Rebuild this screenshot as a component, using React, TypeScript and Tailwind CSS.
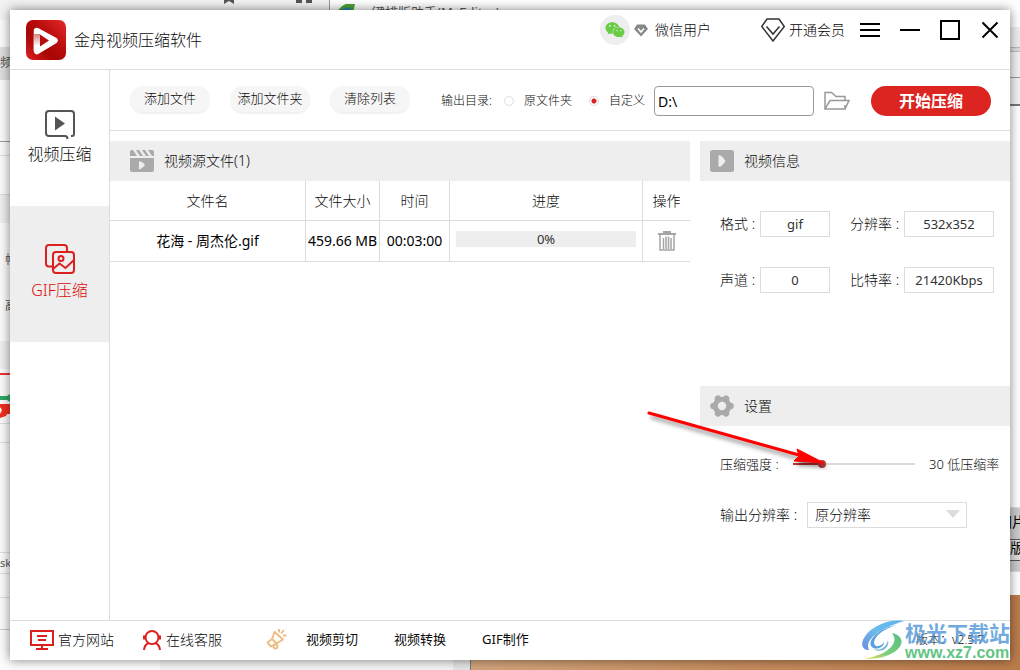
import { useState } from 'react';
import type { ReactNode } from 'react';
import { FaWeixin } from 'react-icons/fa';

const files = [{ name: '花海 - 周杰伦.gif', size: '459.66 MB', time: '00:03:00', progress: 0 }];

/* ---------- icons ---------- */

function LogoIcon() {
  return (
    <svg width="40" height="40" viewBox="0 0 40 40" aria-hidden="true">
      <defs>
        <linearGradient id="logoBg" x1="0" y1="1" x2="1" y2="0">
          <stop offset="0" stopColor="#e02222" />
          <stop offset="0.35" stopColor="#a80505" />
          <stop offset="0.6" stopColor="#b90c0c" />
          <stop offset="1" stopColor="#e62a2a" />
        </linearGradient>
        <linearGradient id="logoFold" x1="0" y1="0" x2="0" y2="1">
          <stop offset="0" stopColor="#d58080" />
          <stop offset="0.7" stopColor="#fff" />
        </linearGradient>
      </defs>
      <rect width="40" height="40" rx="7" fill="url(#logoBg)" />
      <path d="M11 11 28.500 20.500 11 31Z" fill="none" stroke="#fff" strokeWidth="6.500" strokeLinejoin="round" />
      <path d="M7.750 14 14 14V29L7.750 31Z" fill="url(#logoFold)" />
      <path d="M14 14.500 23 20.500 14 26.500Z" fill="#b50d0d" />
    </svg>
  );
}

function VipIcon() {
  return (
    <svg width="24" height="24" viewBox="0 0 24 24" fill="none" stroke="#333" strokeWidth="1.500" aria-hidden="true">
      <path d="M6 1h12l5.300 7.500L12 23 .7 8.500Z" />
      <path d="M5.500 8.500 12 16l6.500-7.500" />
    </svg>
  );
}

function BadgeIcon() {
  return (
    <svg width="14" height="13" viewBox="0 0 14 13" aria-hidden="true">
      <path d="M3 .5h8L14 5 7 12.500 0 5Z" fill="#888" />
      <path d="M4 4.500 7 8l3-3.500" fill="none" stroke="#fff" strokeWidth="1.500" />
    </svg>
  );
}

function FolderIcon() {
  return (
    <svg width="26" height="20" viewBox="0 0 26 20" fill="none" stroke="#999" strokeWidth="1.500" aria-hidden="true">
      <path d="M21 9V5.500H12L7.500 1.500H1v16.500h20V14" />
      <path d="M1 18 6 9.500h19L21 18" />
    </svg>
  );
}

function VideoIcon() {
  return (
    <svg width="30" height="31" viewBox="0 0 30 31" fill="none" stroke="#555" strokeWidth="2" aria-hidden="true">
      <path d="M26 28h1q2 0 2-2V6q0-3-3-3H4Q1 3 1 6v19q0 3 3 3h16q2.500 0 2.500 3" />
      <path d="M10 8.500v14l10-7Z" fill="#555" stroke="none" />
    </svg>
  );
}

function GifIcon() {
  return (
    <svg width="30" height="31" viewBox="0 0 30 31" fill="none" stroke="#dc2020" strokeWidth="2" aria-hidden="true">
      <path d="M8 22.500H4q-3 0-3-3V4q0-3 3-3h15q3 0 3 3v4" />
      <rect x="8" y="8" width="21" height="21" rx="3" />
      <circle cx="16" cy="14.500" r="2.500" />
      <path d="m8 25 6.500-5.500 6 4.500L29 16" />
    </svg>
  );
}

function ClapperIcon() {
  return (
    <svg width="24" height="22" viewBox="0 0 24 22" fill="#aaa" aria-hidden="true">
      <path d="M0 2q0-2 2-2h1l4 6H0ZM6 0h3l4 6h-3ZM12 0h3l4 6h-3ZM18 0h4q2 0 2 2v4h-2Z" />
      <path d="M0 8h24v12q0 2-2 2H2q-2 0-2-2Z" />
      <path d="M9 11.500q2-1 6 3.500-4 5-6 4Z" fill="#eee" />
    </svg>
  );
}

function InfoIcon() {
  return (
    <svg width="24" height="22" viewBox="0 0 24 22" aria-hidden="true">
      <rect width="24" height="22" rx="2.500" fill="#aaa" />
      <path d="M8.500 5.500q2.500-1.500 7 5.500-4.500 7-7 5.500Z" fill="#eee" />
    </svg>
  );
}

function GearIcon() {
  return (
    <svg width="24" height="22" viewBox="0 0 24 22" aria-hidden="true">
      <circle cx="12" cy="11" r="9.300" fill="#aaa" />
      <g stroke="#aaa" strokeWidth="6.500" strokeLinecap="round">
        <path d="M3.500 11h17M8 3.700l8 14.600M16 3.700 8 18.300" />
      </g>
      <circle cx="12" cy="11" r="4.200" fill="#eee" />
    </svg>
  );
}

function TrashIcon() {
  return (
    <svg width="18" height="20" viewBox="0 0 18 20" aria-hidden="true">
      <path d="M5 0h8v2h5v2H0V2h5Z" fill="#a5a5a5" />
      <path d="M2 4v15h14V4M5.500 7v11M8 5.500V18M10.500 5.500V18M13 7v11" fill="none" stroke="#a5a5a5" strokeWidth="1.500" />
    </svg>
  );
}

function MonitorIcon() {
  return (
    <svg width="24" height="20" viewBox="0 0 24 20" fill="none" stroke="#dc2020" strokeWidth="2" aria-hidden="true">
      <path d="M1 1h22v14H1ZM7 6h10M8 10h8M12 15v4M6 19h12" />
    </svg>
  );
}

function ServiceIcon() {
  return (
    <svg width="20" height="20" viewBox="0 0 20 20" fill="none" stroke="#dc2020" strokeWidth="2" aria-hidden="true">
      <circle cx="10" cy="7.500" r="6.500" />
      <path d="M2.500 5.500v4M17.500 5.500v4" strokeWidth="3" />
      <path d="M2 20q.5-5.500 5-7M18 20q-.5-5.500-5-7" />
    </svg>
  );
}

function MegaphoneIcon() {
  return (
    <svg width="21" height="21" viewBox="0 0 21 21" fill="none" stroke="#ecbd85" strokeWidth="1.900" aria-hidden="true">
      <path d="M8.500 3 17 10.500 8 16 5 17.500 1.500 13.500 6 10Z" strokeLinejoin="round" />
      <path d="m6 10 4.500 4.500" />
      <circle cx="9.500" cy="17.500" r="2" />
      <path d="M13 0v3.500M18 1l-3 3.500M20.500 6.500H17" />
    </svg>
  );
}

function Swirl() {
  return (
    <svg width="44" height="40" viewBox="0 0 44 40" aria-hidden="true">
      <defs>
        <linearGradient id="swirlBlue" x1="1" y1="0" x2="0" y2="1">
          <stop offset="0" stopColor="#5fb4ec" />
          <stop offset="0.5" stopColor="#6cbcec" />
          <stop offset="1" stopColor="#6c8fe0" />
        </linearGradient>
        <linearGradient id="swirlGreen" x1="1" y1="0" x2="0" y2="1">
          <stop offset="0" stopColor="#55bf85" />
          <stop offset="0.6" stopColor="#7cce7c" />
          <stop offset="1" stopColor="#f3dc5a" />
        </linearGradient>
      </defs>
      <path d="M43 1C29-1 11 5 3 18-1 25 2 30 8 30 4 22 12 11 43 1Z" fill="url(#swirlBlue)" />
      <path d="M36 5C22 9 14 16 13 22c0 6 7 5 10 0 0 6-9 9-13 4C7 18 20 8 36 5Z" fill="#5aa0dc" />
      <path d="M31 13c9 2 13 9 6 16-6 6-17 10-33 10 12-3 20-6 25-11 5-5 6-10 2-15Z" fill="url(#swirlGreen)" />
      <path d="M12 29c7 2 13-1 15-9 2 8-7 14-15 9Z" fill="#7ab8d8" />
    </svg>
  );
}

/* ---------- other windows behind the app ---------- */

function Desktop() {
  return (
    <div className="absolute inset-0 flex justify-between overflow-hidden bg-[#fafafa] text-xs font-normal text-[#555]" aria-hidden="true">
      <div className="absolute inset-x-0 top-0 flex h-5 bg-[#f2f2f2]">
        <div className="w-[224px]" />
        <svg width="10" height="4" viewBox="0 0 10 4">
          <path d="M0 0h10v4L5 1 0 4Z" fill="#555" />
        </svg>
        <div className="flex w-[95px] gap-1 pl-[62px]">
          <span className="h-[3px] w-[6px] bg-[#555]" />
          <span className="h-[3px] w-[6px] bg-[#555]" />
        </div>
        <div className="flex flex-1 gap-1 border-l border-[#999] bg-white pl-2 pt-1">
          <svg width="17" height="14" viewBox="0 0 17 14">
            <path d="M0 6Q7-3 17 0L14 14H2Z" fill="#4aa338" />
            <path d="M1 8q6-6 12-4l-2 10H2Z" fill="#2582b8" />
          </svg>
          <span className="text-[13px] leading-4">一键排版助手(MyEditor)</span>
        </div>
      </div>
      <div className="absolute inset-x-0 bottom-0 flex h-5">
        <div className="w-40 bg-[#fcfcfc]" />
        <div className="w-[293px] bg-[#f3f3f3]" />
        <div className="w-[18px] border-r border-[#777] bg-[#e4e4e4]" />
        <div className="flex-1 bg-gradient-to-r from-[#d2a47c] via-[#c68c5c] to-[#bb7c4c]" />
      </div>

      <div className="relative w-[10px] overflow-hidden whitespace-nowrap">
        <div className="h-[47px]" />
        <div className="h-[33px] bg-[#dedede] leading-8">频分</div>
        <div className="h-[62px] border-b border-[#999]" />
        <div className="h-[14px] border-b border-[#ddd]" />
        <div className="h-[39px] border-b border-[#ddd]" />
        <div className="h-[28px] bg-[#eee]" />
        <div className="h-[72px] pl-[5px] pt-[29px] leading-4">帧</div>
        <div className="h-[46px] pl-[5px] pt-[3px] leading-4">高</div>
        <div className="h-[28px] bg-[#eee]" />
        <div className="h-[6px] border-b-2 border-[#e33]" />
        <svg width="10" height="48" viewBox="0 0 10 48">
          <path d="M0 21h7l3-2v8l-3-2H0Z" fill="#2fa866" />
          <path d="M0 29h10v10H7l-1 2-3 1-3 1v-4l2-4-2-3Z" fill="#f03020" />
        </svg>
        <div className="h-[20px] border-y border-[#ddd]" />
        <div className="h-[110px] border-b border-[#ddd]" />
        <div className="h-[21px] border-b border-[#ddd] text-[11px] leading-5">sky</div>
        <div className="h-[24px] border-b border-[#ddd]" />
        <div className="h-[32px] border-b border-[#ccc]" />
      </div>

      <div className="relative flex w-[10px] flex-col overflow-hidden whitespace-nowrap bg-white text-sm text-black">
        <div className="h-[27px]" />
        <div className="h-[20px] bg-[#eee]" />
        <div className="h-[5px] border-y border-[#bbb] bg-[#ddd]" />
        <div className="h-[26px] border-b border-[#999] bg-[#f2f2f2]" />
        <div className="h-[28px] border-b-2 border-[#777] bg-[#f2f2f2]" />
        <div className="h-[402px] border-b border-[#ddd]" />
        <div className="h-[32px] border-b border-[#555] bg-[#ccc] leading-7">
          <span className="-ml-3">图片</span>
        </div>
        <div className="h-[21px] border-b border-[#555] bg-[#ddd] leading-4">版</div>
        <div className="h-[10px] bg-[#ccc]" />
        <div className="h-[24px] border-t border-[#ddd]" />
        <div className="flex-1 bg-[#bb7c4c]" />
      </div>
    </div>
  );
}

/* ---------- app parts ---------- */

function TitleBar() {
  return (
    <header className="flex h-[60px] shrink-0 items-start justify-between border-b border-[#dcdcdc] pl-4 pr-2.5">
      <div className="flex items-center gap-2 pt-2.5">
        <LogoIcon />
        <h1 className="text-base">金舟视频压缩软件</h1>
      </div>
      <div className="flex h-10 items-center text-sm">
        <span className="flex h-[30px] w-[30px] items-center justify-center rounded-full bg-[#eee]">
          <FaWeixin size={20} color="#69cc45" />
        </span>
        <span className="ml-1">
          <BadgeIcon />
        </span>
        <span className="ml-[7px]">微信用户</span>
        <a href="#vip" className="ml-[50px] flex items-center gap-1 text-black">
          <VipIcon />
          开通会员
        </a>
        <div className="ml-[15px] flex gap-5">
          <button type="button" aria-label="菜单">
            <svg width="20" height="20" viewBox="0 0 20 20" stroke="#000" strokeWidth="2">
              <path d="M0 4h20M0 10h20M0 16h20" />
            </svg>
          </button>
          <button type="button" aria-label="最小化">
            <svg width="20" height="20" viewBox="0 0 20 20" stroke="#000" strokeWidth="2">
              <path d="M0 10h20" />
            </svg>
          </button>
          <button type="button" aria-label="最大化">
            <svg width="20" height="20" viewBox="0 0 20 20" fill="none" stroke="#000" strokeWidth="2">
              <path d="M1 1h18v18H1Z" />
            </svg>
          </button>
          <button type="button" aria-label="关闭">
            <svg width="20" height="20" viewBox="0 0 20 20" stroke="#000" strokeWidth="2">
              <path d="m2.500 2.500 15 15M17.500 2.500l-15 15" />
            </svg>
          </button>
        </div>
      </div>
    </header>
  );
}

function Sidebar() {
  return (
    <nav className="flex w-[100px] shrink-0 flex-col border-r border-[#dcdcdc] text-base">
      <button type="button" className="flex h-[136px] flex-col items-center gap-[3px] pt-[38px]">
        <VideoIcon />
        视频压缩
      </button>
      <button type="button" className="flex h-[136px] flex-col items-center gap-[3px] bg-[#eee] pt-[38px] text-[#dc0c0c]">
        <GifIcon />
        GIF压缩
      </button>
    </nav>
  );
}

function PillButton({ children }: { children: ReactNode }) {
  return (
    <button type="button" className="h-[26px] w-20 rounded-full bg-[#f6f6f6] text-[13px] shadow-[0_2px_1px_rgba(0,0,0,0.06)]">
      {children}
    </button>
  );
}

function Toolbar() {
  const [target, setTarget] = useState('custom');
  const [path, setPath] = useState('D:\\');
  const radio =
    'h-[10px] w-[10px] appearance-none rounded-full border border-[#ddd] bg-white checked:bg-[radial-gradient(circle,#dc2020_2px,#fff_3px)]';

  return (
    <div className="flex h-[61px] shrink-0 items-center border-b border-[#dcdcdc] pl-5 pr-[19px] pt-[2px] text-xs">
      <div className="flex gap-5 pb-[5px]">
        <PillButton>添加文件</PillButton>
        <PillButton>添加文件夹</PillButton>
        <PillButton>清除列表</PillButton>
      </div>
      <div className="ml-[31px] flex items-center">
        <span className="w-[63px]">输出目录:</span>
        <label className="flex items-center gap-[10px]">
          <input type="radio" name="target" className={radio} checked={target === 'source'} onChange={() => setTarget('source')} />
          原文件夹
        </label>
        <label className="ml-[17px] flex items-center gap-[10px]">
          <input type="radio" name="target" className={radio} checked={target === 'custom'} onChange={() => setTarget('custom')} />
          自定义
        </label>
        <input
          type="text"
          aria-label="输出目录"
          value={path}
          onChange={(e) => setPath(e.target.value)}
          className="ml-[9px] h-[30px] w-40 rounded border border-[#999] px-[3px] text-sm font-normal text-black"
        />
        <button type="button" aria-label="浏览" className="ml-[10px]">
          <FolderIcon />
        </button>
      </div>
      <button type="button" className="ml-auto h-[30px] w-[120px] rounded-full bg-[#dc2420] text-base font-bold text-white">
        开始压缩
      </button>
    </div>
  );
}

function SectionHeader({ icon, children }: { icon: ReactNode; children: ReactNode }) {
  return (
    <h2 className="flex h-10 items-center gap-[10px] bg-[#eee] text-sm">
      {icon}
      {children}
    </h2>
  );
}

function FileTable() {
  return (
    <section className="min-w-0 flex-1">
      <div className="bg-[#eee] pl-5">
        <SectionHeader icon={<ClapperIcon />}>视频源文件(1)</SectionHeader>
      </div>
      <table className="w-full table-fixed border-separate border-spacing-0 text-center text-sm">
        <colgroup>
          <col />
          <col className="w-[74px]" />
          <col className="w-[70px]" />
          <col className="w-[193px]" />
          <col className="w-[47px]" />
        </colgroup>
        <thead>
          <tr className="h-10 [&>th]:border-r [&>th]:border-b [&>th]:border-[#dcdcdc] [&>th]:p-0 [&>th]:font-light [&>th:last-child]:border-r-0">
            <th>文件名</th>
            <th>文件大小</th>
            <th>时间</th>
            <th>进度</th>
            <th>操作</th>
          </tr>
        </thead>
        <tbody>
          {files.map((file) => (
            <tr
              key={file.name}
              className="h-[41px] font-normal text-black [&>td]:border-r [&>td]:border-b [&>td]:border-[#dcdcdc] [&>td]:p-0 [&>td:last-child]:border-r-0"
            >
              <td>{file.name}</td>
              <td className="whitespace-nowrap">{file.size}</td>
              <td>{file.time}</td>
              <td>
                <div
                  role="progressbar"
                  aria-label="进度"
                  aria-valuenow={file.progress}
                  className="mx-[6px] mb-1 h-4 bg-[#eee] text-[13px] leading-4 text-[#333]"
                >
                  {file.progress}%
                </div>
              </td>
              <td>
                <button type="button" aria-label="删除" className="block w-full">
                  <span className="flex justify-center">
                    <TrashIcon />
                  </span>
                </button>
              </td>
            </tr>
          ))}
        </tbody>
      </table>
    </section>
  );
}

function Field({ label, value, wide = false }: { label: string; value: string; wide?: boolean }) {
  return (
    <label className="flex items-center justify-between">
      {label} :
      <input
        readOnly
        value={value}
        className={`h-[26px] border border-[#dcdcdc] text-center text-[13px] font-normal text-[#333] ${wide ? 'w-[90px]' : 'w-[70px]'}`}
      />
    </label>
  );
}

function Arrow() {
  return (
    <svg
      className="pointer-events-none absolute -left-[55px] top-[20px] overflow-visible drop-shadow-[3px_4px_2px_rgba(0,0,0,0.45)]"
      width="184"
      height="66"
      viewBox="0 0 184 66"
      aria-hidden="true"
    >
      <path d="M4 7 154 49" stroke="#f00" strokeWidth="3" strokeLinecap="round" />
      <path d="M152 43 179 57 149 55 154 50Z" fill="#f00" stroke="#f00" />
    </svg>
  );
}

function SidePanel() {
  const [level, setLevel] = useState(30);
  const min = 10;
  const max = 100;
  const filled = ((level - min) / (max - min)) * 100;

  return (
    <aside className="flex w-[310px] shrink-0 flex-col text-sm">
      <div className="bg-[#eee] pl-[10px]">
        <SectionHeader icon={<InfoIcon />}>视频信息</SectionHeader>
      </div>
      <div className="grid grid-cols-[110px_144px] gap-x-5 gap-y-[30px] px-5 pb-[93px] pt-[30px]">
        <Field label="格式" value="gif" />
        <Field label="分辨率" value="532x352" wide />
        <Field label="声道" value="0" />
        <Field label="比特率" value="21420Kbps" wide />
      </div>
      <section className="relative">
        <div className="bg-[#eee] pl-[10px]">
          <SectionHeader icon={<GearIcon />}>设置</SectionHeader>
        </div>
        <div className="flex items-center whitespace-nowrap pl-5 pt-7 text-[13px] leading-5">
          <label htmlFor="level" className="w-[73px]">
            压缩强度 :
          </label>
          <input
            id="level"
            type="range"
            min={min}
            max={max}
            value={level}
            onChange={(e) => setLevel(Number(e.target.value))}
            style={{ backgroundSize: `${filled}% 100%` }}
            className="h-[2px] w-[122px] appearance-none bg-[#dcdcdc] bg-[linear-gradient(#c83232,#c83232)] bg-no-repeat [&::-webkit-slider-thumb]:h-2 [&::-webkit-slider-thumb]:w-2 [&::-webkit-slider-thumb]:appearance-none [&::-webkit-slider-thumb]:rounded-full [&::-webkit-slider-thumb]:bg-[#c83c3c]"
          />
          <span className="ml-[14px]">{level} 低压缩率</span>
        </div>
        <div className="flex items-center pl-5 pt-7">
          <label htmlFor="resolution" className="w-[87px]">
            输出分辨率 :
          </label>
          <div className="relative">
            <select id="resolution" className="h-[26px] w-40 appearance-none border border-[#dcdcdc] bg-white px-[7px] text-sm">
              <option>原分辨率</option>
            </select>
            <svg className="pointer-events-none absolute right-[7px] top-2" width="14" height="8" viewBox="0 0 14 8" aria-hidden="true">
              <path d="M0 0h14L7 8Z" fill="#dcdcdc" />
            </svg>
          </div>
        </div>
        <Arrow />
      </section>
    </aside>
  );
}

function Footer() {
  return (
    <footer className="relative flex h-10 shrink-0 items-center border-t border-[#dcdcdc] pb-[2px] pl-5 pr-[26px] text-sm">
      <a href="#site" className="flex items-center gap-1">
        <MonitorIcon />
        官方网站
      </a>
      <a href="#service" className="ml-7 flex items-center gap-1">
        <ServiceIcon />
        在线客服
      </a>
      <div className="ml-11 flex items-center text-[13px] font-normal">
        <MegaphoneIcon />
        <a href="#cut" className="ml-[19px]">视频剪切</a>
        <a href="#convert" className="ml-9">视频转换</a>
        <a href="#gif" className="ml-9">GIF制作</a>
      </div>
      <span className="ml-auto text-xs">版本：v2.5.7</span>
      <div className="pointer-events-none absolute bottom-0 right-0 flex items-end">
        <Swirl />
        <div className="flex flex-col">
          <span className="text-[21px] font-bold leading-[26px] text-[#4c93d6]/80">极光下载站</span>
          <span className="font-['Liberation_Sans',sans-serif] text-base font-bold leading-[14px] text-[#62c484]">www.xz7.com</span>
        </div>
      </div>
    </footer>
  );
}

export default function App() {
  return (
    <div className="relative flex min-h-screen flex-col p-2.5 font-['Noto_Sans','Noto_Sans_CJK_SC',sans-serif] font-light text-[#0a0a0a]">
      <Desktop />
      <div className="relative flex flex-1 flex-col bg-white shadow-[0_0_10px_rgba(0,0,0,0.5)]">
        <TitleBar />
        <div className="flex flex-1">
          <Sidebar />
          <main className="flex min-w-0 flex-1 flex-col">
            <Toolbar />
            <div className="flex gap-[10px] pt-[10px]">
              <FileTable />
              <SidePanel />
            </div>
          </main>
        </div>
        <Footer />
      </div>
    </div>
  );
}
